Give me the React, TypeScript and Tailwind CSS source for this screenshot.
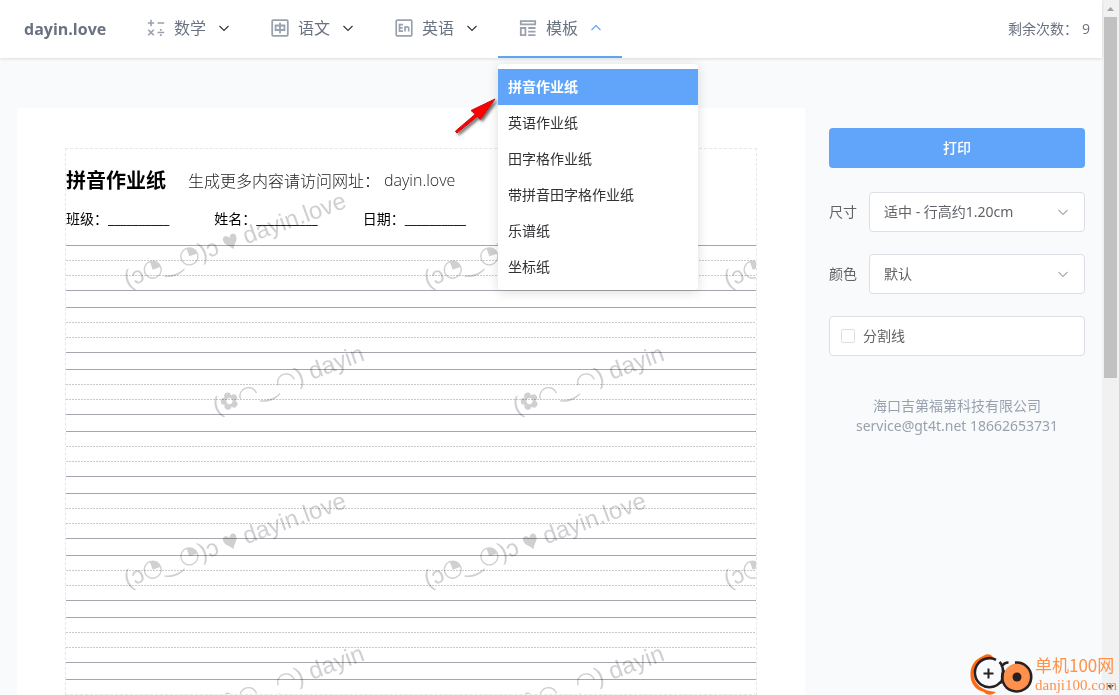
import type { ReactNode } from "react";

const uiFont = "font-['Open_Sans','Noto_Sans_CJK_SC',sans-serif]";

function Chevron({ up = false, className = "" }: { up?: boolean; className?: string }) {
  return (
    <svg className={className} width="12" height="12" viewBox="0 0 12 12" fill="none" stroke="currentColor" aria-hidden="true">
      <path d={up ? "M1.5 8 6 3.5 10.5 8" : "M1.5 4 6 8.5 10.5 4"} strokeWidth="1.1" />
    </svg>
  );
}

function MathIcon() {
  return (
    <svg width="18" height="18" viewBox="0 0 18 18" fill="none" stroke="currentColor" strokeWidth="1.6" aria-hidden="true">
      <path d="M4 .8v6.4M.8 4h6.4M10.5 4h6.700M1.200 10.700l5.600 5.600M6.800 10.700l-5.600 5.600M10.500 13.500h6.700" />
      <path d="M13.800 10v1.800M13.800 15.300v1.800" strokeWidth="1.800" />
    </svg>
  );
}

function ChineseIcon() {
  return (
    <svg width="18" height="18" viewBox="0 0 18 18" fill="none" stroke="currentColor" strokeWidth="1.8" aria-hidden="true">
      <rect x="1.200" y="1.200" width="15.600" height="15.600" rx="1" />
      <path d="M4.600 6.500h8.800v4.500H4.600zM9 3.800v10.400" />
    </svg>
  );
}

function EnglishIcon() {
  return (
    <svg width="18" height="18" viewBox="0 0 18 18" fill="none" stroke="currentColor" strokeWidth="1.7" aria-hidden="true">
      <rect x="1.200" y="1.200" width="15.600" height="15.600" rx="1" />
      <path d="M8 5.600H4.500v6.500H8M4.500 8.900h3.200M10 12.600V7.200M10 9.200c.4-1.700 3.700-2 3.700.2v3.200" />
    </svg>
  );
}

function TemplateIcon() {
  return (
    <svg width="18" height="18" viewBox="0 0 18 18" fill="none" stroke="currentColor" strokeWidth="1.8" aria-hidden="true">
      <path d="M1.800 2.200h14.400v3.200H1.800zM1.800 9h4.600v7.200H1.800zM9.200 9h7.300M9.200 12.600h7.300M9.200 16.200h7.300" />
    </svg>
  );
}

const navItems: { label: string; icon: ReactNode }[] = [
  { label: "数学", icon: <MathIcon /> },
  { label: "语文", icon: <ChineseIcon /> },
  { label: "英语", icon: <EnglishIcon /> },
  { label: "模板", icon: <TemplateIcon /> },
];

const templates = ["拼音作业纸", "英语作业纸", "田字格作业纸", "带拼音田字格作业纸", "乐谱纸", "坐标纸"];

function Arrow() {
  return (
    <svg className="pointer-events-none absolute right-full top-8 z-20" width="46" height="46" viewBox="0 0 46 46" aria-hidden="true">
      <defs>
        <filter id="arrow-shadow" x="-20%" y="-20%" width="150%" height="150%">
          <feDropShadow dx="2" dy="2" stdDeviation="1.4" floodOpacity="0.6" />
        </filter>
      </defs>
      <path
        d="M43 3 19 14.500 23.500 18 3.400 35.200 5 37 25.600 20.200 28.200 23.500Z"
        fill="#f00"
        stroke="#c01010"
        strokeWidth="1"
        strokeLinejoin="round"
        filter="url(#arrow-shadow)"
      />
    </svg>
  );
}

function TemplateMenu() {
  return (
    <div className="absolute left-0 top-16 z-20 w-[200px] rounded-sm bg-white py-[5px] shadow-[0_2px_12px_rgba(0,0,0,0.14)]">
      <Arrow />
      <ul>
        {templates.map((name, i) => (
          <li key={name}>
            <a
              href="#"
              className={
                i === 0
                  ? "flex h-9 items-center bg-[#60a5fa] px-[10px] text-sm font-bold text-white"
                  : "flex h-9 items-center px-[10px] text-sm text-[#303133]"
              }
            >
              {name}
            </a>
          </li>
        ))}
      </ul>
    </div>
  );
}

function Header() {
  return (
    <header className="relative z-10 flex h-[58px] items-stretch bg-white pl-6 pr-3 text-gray-500 shadow-[0_1px_3px_rgba(0,0,0,0.12)]">
      <a href="#" className="flex w-[102px] items-center text-base font-bold">dayin.love</a>
      <nav className="flex">
        {navItems.map(({ label, icon }) => {
          const active = label === "模板";
          return (
            <div key={label} className="relative flex">
              <button
                type="button"
                aria-expanded={active}
                className={
                  active
                    ? "flex w-[124px] items-center border-b-2 border-[#60a5fa] pl-[21px] text-base"
                    : "flex w-[124px] items-center border-b-2 border-transparent pl-[21px] text-base"
                }
              >
                <span className="text-gray-400">{icon}</span>
                <span className="ml-[9px]">{label}</span>
                <Chevron up={active} className={active ? "ml-3 text-[#60a5fa]" : "ml-3 text-[#303133]"} />
              </button>
              {active && <TemplateMenu />}
            </div>
          );
        })}
      </nav>
      <p className="ml-auto flex items-center gap-1 text-sm">
        <span>剩余次数：</span>
        <span>9</span>
      </p>
    </header>
  );
}

function Eye() {
  return (
    <svg className="inline-block align-[-2px]" width="20" height="20" viewBox="0 0 20 20" aria-hidden="true">
      <circle cx="10" cy="10" r="8.500" fill="none" stroke="currentColor" strokeWidth="1.400" />
      <path d="M10 10V1.500A8.500 8.500 0 0 1 18.500 10Z" fill="currentColor" />
    </svg>
  );
}

function Heart() {
  return (
    <svg className="inline-block align-[-1px]" width="14" height="17" viewBox="0 0 14 17" fill="currentColor" aria-hidden="true">
      <path d="M7 16.500C5.500 12 0 10 0 5 0 .5 5.500 0 7 4.500 8.500 0 14 .5 14 5 14 10 8.500 12 7 16.500Z" />
    </svg>
  );
}

function Flower() {
  return (
    <svg className="inline-block align-[-2px]" width="18" height="20" viewBox="1 0 18 20" fill="none" stroke="currentColor" aria-hidden="true">
      <path
        d="M10 5.500V4.600M14.200 8.600l.8-.3M12.700 13.600l.5.700M7.300 13.600l-.5.700M5.800 8.600l-.8-.3"
        strokeWidth="7"
        strokeLinecap="round"
      />
      <circle cx="10" cy="10" r="3" fill="white" stroke="none" />
    </svg>
  );
}

function Watermark() {
  return (
    <div
      aria-hidden="true"
      className="pointer-events-none absolute inset-0 flex flex-col overflow-hidden font-['Liberation_Sans','DejaVu_Sans',sans-serif] text-2xl text-[#d0d0d0] mix-blend-multiply"
    >
      {[0, 1].map((row) => (
        <div key={row} className="flex shrink-0">
          {[0, 1, 2].map((col) => (
            <div key={col} className="relative h-[300px] w-[300px] shrink-0 whitespace-nowrap">
              <span className="absolute left-16 top-[114px] h-8 origin-bottom-left -rotate-20 leading-8">
                (ɔ<Eye />‿<Eye />)ɔ <Heart /> dayin.love
              </span>
              {col < 2 && (
                <span className="absolute left-[153px] top-[241px] h-8 origin-bottom-left -rotate-20 leading-8">
                  (<Flower />◠‿◠) dayin
                </span>
              )}
            </div>
          ))}
        </div>
      ))}
    </div>
  );
}

const guideLine = "h-px bg-[repeating-linear-gradient(90deg,#c9cacd_0_2px,transparent_2px_3px)]";

function Paper() {
  return (
    <section className="flex min-w-0 flex-1 flex-col bg-white px-12 pt-10">
      <div className="relative flex-1 overflow-hidden border border-dashed border-gray-200 text-black">
        <div className="flex h-[62px] items-center gap-[22px] font-['Noto_Sans_CJK_SC',sans-serif]">
          <h1 className="text-xl font-bold">拼音作业纸</h1>
          <p className="flex items-center gap-1 text-base font-light text-[#222]">
            <span>生成更多内容请访问网址：</span>
            <span className="font-['Open_Sans',sans-serif]">dayin.love</span>
          </p>
        </div>
        <div className="flex h-[34px] gap-[45px] pt-[2px] text-sm leading-3">
          {["班级", "姓名", "日期"].map((field) => (
            <p key={field} className="flex">
              <span>{field}：</span>
              <span>__________</span>
            </p>
          ))}
        </div>
        <div className="flex flex-col gap-4">
          {Array.from({ length: 9 }, (_, i) => (
            <div key={i} className="flex h-[46px] flex-col justify-between border-y border-[#a3a6ac] py-[14px]">
              <div className={guideLine} />
              <div className={guideLine} />
            </div>
          ))}
        </div>
        <Watermark />
      </div>
    </section>
  );
}

function SelectField({ id, label, value }: { id: string; label: string; value: string }) {
  return (
    <div className="flex items-center gap-3">
      <label htmlFor={id} className="shrink-0">{label}</label>
      <div className="relative flex-1">
        <select id={id} className="h-10 w-full appearance-none rounded-sm border border-[#dcdfe6] bg-white px-[14px] text-sm text-[#606266]">
          <option>{value}</option>
        </select>
        <Chevron className="pointer-events-none absolute right-4 top-[14px] text-[#a8abb2]" />
      </div>
    </div>
  );
}

function Sidebar() {
  return (
    <aside className="flex w-64 shrink-0 flex-col gap-[22px] pt-5 font-['Noto_Sans','Noto_Sans_CJK_SC',sans-serif] text-sm text-[#606266]">
      <button type="button" className="mb-[2px] h-10 rounded-sm bg-[#60a5fa] font-medium text-white">打印</button>
      <SelectField id="size" label="尺寸" value="适中 - 行高约1.20cm" />
      <SelectField id="color" label="颜色" value="默认" />
      <label className="flex h-10 items-center gap-2 rounded-sm border border-[#dcdfe6] bg-white px-[11px]">
        <input type="checkbox" className="h-[14px] w-[14px] appearance-none rounded-xs border border-[#dcdfe6] bg-white" />
        分割线
      </label>
      <footer className="mt-[18px] text-center leading-5 text-gray-400">
        <p>海口吉第福第科技有限公司</p>
        <p>service@gt4t.net 18662653731</p>
      </footer>
    </aside>
  );
}

function ScrollTrack() {
  return (
    <div aria-hidden="true" className="flex w-[17px] shrink-0 flex-col items-center bg-[#f1f1f1]">
      <div className="flex h-[17px] items-center">
        <svg width="7" height="4" viewBox="0 0 7 4" fill="#a3a3a3"><path d="M0 4 3.500 0 7 4Z" /></svg>
      </div>
      <div className="h-[52vh] w-[13px] bg-[#c1c1c1]" />
      <div className="mt-auto flex h-[17px] items-center">
        <svg width="7" height="4" viewBox="0 0 7 4" fill="#505050"><path d="M0 0h7L3.500 4Z" /></svg>
      </div>
    </div>
  );
}

function SiteBadge() {
  return (
    <div className="pointer-events-none absolute bottom-0 right-0 z-30 flex h-[42px] items-start gap-[2px] text-[#ff9149]">
      <svg width="63" height="42" viewBox="0 0 63 42" fill="none" aria-hidden="true">
        <path d="M23 4C21 1 17 0 13 3 6 6 1 11 .5 20 0 30 5 37 14 39c3 4 9 3 12 0C12 38 4 31 3.500 21 4 11 11 5 23 4Z" fill="#ff6a10" />
        <path d="M26 6.800A14.500 14.500 0 1 0 30.500 29" stroke="#2a2022" strokeWidth="2.600" />
        <path d="M29.500 9c4.500 4 5 16 .5 21.500M31.500 14c1.500-3 4-4.500 7-4.500" stroke="#2a2022" strokeWidth="2.600" />
        <circle cx="47" cy="24" r="13.500" fill="#ff914d" />
        <path d="M45 9.600A14.500 14.500 0 1 1 34 17" stroke="#2a2022" strokeWidth="2.600" />
        <circle cx="47" cy="24" r="4.500" fill="#2a2022" />
        <path d="M18.500 15.500v10M13.500 20.500h10" stroke="#2a2022" strokeWidth="2" />
      </svg>
      <div className="w-[84px] whitespace-nowrap">
        <p className="font-['Noto_Sans_CJK_SC',sans-serif] text-[17px] leading-6">单机100网</p>
        <p className="font-['Liberation_Serif',serif] text-[15px] leading-4">danji100.com</p>
      </div>
    </div>
  );
}

export default function App() {
  return (
    <div className={`relative flex h-screen overflow-hidden bg-[#f9fafc] ${uiFont}`}>
      <div className="flex min-w-0 flex-1 flex-col">
        <Header />
        <main className="flex min-h-0 flex-1 gap-6 px-[17px] pt-[50px]">
          <Paper />
          <Sidebar />
        </main>
      </div>
      <ScrollTrack />
      <SiteBadge />
    </div>
  );
}
